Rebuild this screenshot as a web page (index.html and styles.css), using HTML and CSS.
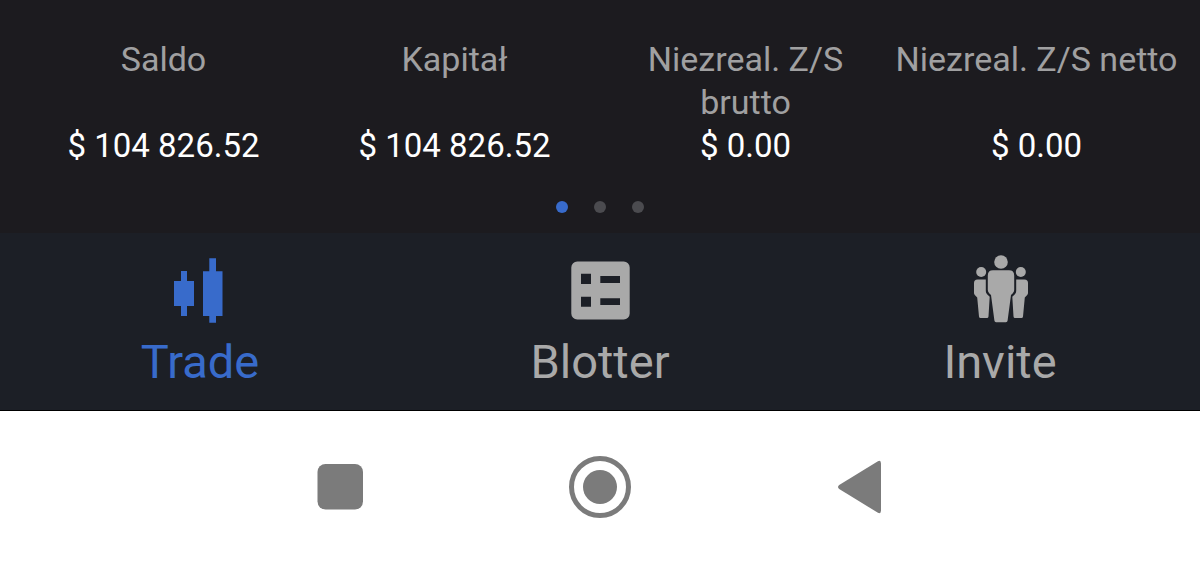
FILE: index.html
```
<!DOCTYPE html>
<html lang="pl">
<head>
    <meta charset="utf-8">
    <title>Trade</title>
    <meta name="viewport" content="width=device-width, initial-scale=1.0">
    <link rel="stylesheet" href="styles.css">
</head>
<body>
    <main class="summary">
        <dl class="balances">
            <div class="balance">
                <dt>Saldo</dt>
                <dd>$ 104 826.52</dd>
            </div>
            <div class="balance">
                <dt>Kapitał</dt>
                <dd>$ 104 826.52</dd>
            </div>
            <div class="balance">
                <dt>Niezreal. Z/S<br>brutto</dt>
                <dd>$ 0.00</dd>
            </div>
            <div class="balance">
                <dt>Niezreal. Z/S netto</dt>
                <dd>$ 0.00</dd>
            </div>
        </dl>
        <div class="dots">
            <button class="dot active" aria-label="1"></button>
            <button class="dot" aria-label="2"></button>
            <button class="dot" aria-label="3"></button>
        </div>
    </main>
    <nav class="tabs">
        <a class="tab active" href="#trade">
            <svg class="tab-icon" viewBox="0 0 80 68">
                <path d="M21 16h6v10h7v25h-7v10h-6V51h-7V26h7z"/>
                <path d="M49.3 3.3H56v13h6.5V61H56v6.7h-6.7V61H43V16.3h6.3z"/>
            </svg>
            <span>Trade</span>
        </a>
        <a class="tab" href="#blotter">
            <svg class="tab-icon" viewBox="0 0 80 68">
                <path fill-rule="evenodd" d="M17.3 6.5h46.4a6 6 0 0 1 6 6v46a6 6 0 0 1-6 6H17.3a6 6 0 0 1-6-6v-46a6 6 0 0 1 6-6zM21 18.7V29h10V18.7zM21 41.7v10h10v-10zM40.300 21v7H60v-7zM40.300 43.300V50H60v-6.700z"/>
            </svg>
            <span>Blotter</span>
        </a>
        <a class="tab" href="#invite">
            <svg class="tab-icon" viewBox="0 0 80 68">
                <circle cx="41" cy="7" r="6.8"/>
                <path d="M33 15.2h16q5.2 0 5.2 5.2V35q0 2-1.600 3.400L51 40l-3.400 25.500q-.2 1.700-1.700 1.700h-9.800q-1.500 0-1.700-1.700L31 40l-1.600-1.600Q27.800 37 27.800 35V20.400q0-5.200 5.200-5.200z"/>
                <circle cx="21.2" cy="17" r="5"/>
                <path d="M17.5 24.5h8.300V36q0 2 1.300 3.300l2.600 2.500L28.500 61.500q-.2 1.500-1.500 1.500h-6.500q-1.300 0-1.500-1.500L17.200 42.500 14.800 40q-.8-.8-.8-2V28q0-3.500 3.500-3.500z"/>
                <circle cx="60.8" cy="17" r="5"/>
                <path d="M64.5 24.5h-8.300V36q0 2-1.300 3.300l-2.600 2.500L53.500 61.500q.2 1.500 1.500 1.500h6.500q1.300 0 1.500-1.500L64.800 42.500 67.200 40q.8-.8.8-2V28q0-3.500-3.500-3.500z"/>
            </svg>
            <span>Invite</span>
        </a>
    </nav>
    <footer class="system-bar">
        <button class="system-button" aria-label="Recent apps">
            <svg viewBox="0 0 64 64"><rect x="9.500" y="9" width="45.500" height="45.500" rx="8"/></svg>
        </button>
        <button class="system-button" aria-label="Home">
            <svg viewBox="0 0 64 64">
                <circle class="ring" cx="32" cy="32" r="28.5"/>
                <circle cx="32" cy="32" r="17"/>
            </svg>
        </button>
        <button class="system-button" aria-label="Back">
            <svg viewBox="0 0 64 64"><path d="M11.200 30 49.500 6.500Q53 4.500 53 8.500V55.500Q53 59.500 49.500 57.500L11.200 34q-2.400-2 0-4z"/></svg>
        </button>
    </footer>
</body>
</html>
```

FILE: styles.css
```
* {
    box-sizing: border-box;
}
body {
    margin: 0;
    min-height: 100vh;
    display: flex;
    flex-direction: column;
    font-family: Roboto, "Noto Sans", sans-serif;
    background: #fff;
}
button {
    padding: 0;
    border: none;
    background: none;
    cursor: pointer;
}
.summary {
    padding: 38px 18px 20px;
    background: #1c1b1f;
}
.balances {
    display: grid;
    grid-template-columns: repeat(4, 1fr);
    margin: 0;
    text-align: center;
    line-height: 43px;
}
.balance {
    display: flex;
    flex-direction: column;
    justify-content: space-between;
}
.balance dt {
    color: #a0a0a1;
    font-size: 34px;
}
.balance dd {
    margin: 0;
    color: #fff;
    font-size: 33px;
}
.dots {
    display: flex;
    justify-content: center;
    gap: 26px;
    margin-top: 34px;
}
.dot {
    width: 12px;
    height: 12px;
    border-radius: 50%;
    background: #4b4b4f;
}
.dot.active {
    background: #386bcb;
}
.tabs {
    display: grid;
    grid-template-columns: repeat(3, 1fr);
    padding: 22px 0 18px;
    background: #1c1f26;
    border-bottom: 1px solid #000;
}
.tab {
    display: flex;
    flex-direction: column;
    align-items: center;
    gap: 9px;
    color: #a9a9a9;
    font-size: 47px;
    line-height: 60px;
    text-decoration: none;
}
.tab.active {
    color: #386bcb;
}
.tab-icon {
    width: 80px;
    height: 68px;
    fill: currentColor;
}
.system-bar {
    display: flex;
    justify-content: center;
    gap: 196px;
    padding: 44px 0 42px;
}
.system-button {
    width: 64px;
    height: 64px;
}
.system-button svg {
    display: block;
    fill: #7b7b7b;
}
.system-button .ring {
    fill: none;
    stroke: #7b7b7b;
    stroke-width: 5;
}
```
